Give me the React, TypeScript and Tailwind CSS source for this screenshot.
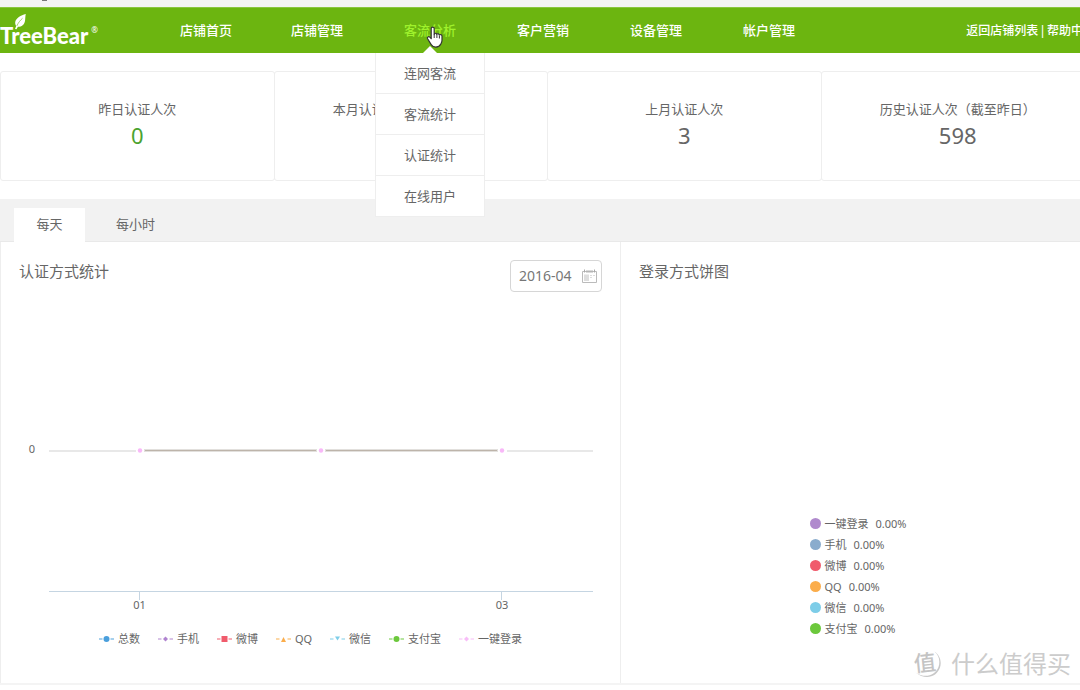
import React from 'react';

const navAfter = ['客户营销', '设备管理', '帐户管理'];
const submenu = ['连网客流', '客流统计', '认证统计', '在线用户'];

const stats = [
  { label: '昨日认证人次', value: '0', color: 'text-[#4ba32f]' },
  { label: '本月认证人次（截至昨日）', value: '', color: 'text-[#666666]' },
  { label: '上月认证人次', value: '3', color: 'text-[#666666]' },
  { label: '历史认证人次（截至昨日）', value: '598', color: 'text-[#666666]' },
];

const series = [
  { name: '总数', color: '#4a9fdc', mark: <circle cx="7.5" cy="5" r="3" /> },
  { name: '手机', color: '#b083d0', mark: <path d="M7.5 2.5 10 5 7.5 7.5 5 5z" /> },
  { name: '微博', color: '#f05b6c', mark: <path d="M4.5 2h6v6h-6z" /> },
  { name: 'QQ', color: '#fbad4b', mark: <path d="M7.5 3 10 8H5z" /> },
  { name: '微信', color: '#7dcde8', mark: <path d="M5 2.5h5l-2.5 4z" /> },
  { name: '支付宝', color: '#6cc83c', mark: <circle cx="7.5" cy="5" r="3" /> },
  { name: '一键登录', color: '#f8bdf8', mark: <path d="M7.5 2.500 10 5 7.5 7.500 5 5z" /> },
];

const shares = [
  { name: '一键登录', dot: 'bg-[#b08acd]' },
  { name: '手机', dot: 'bg-[#8aaccd]' },
  { name: '微博', dot: 'bg-[#f05b6c]' },
  { name: 'QQ', dot: 'bg-[#fbad4b]' },
  { name: '微信', dot: 'bg-[#7dcde8]' },
  { name: '支付宝', dot: 'bg-[#6cc83c]' },
];

function NavLink({ label }: { label: string }) {
  return (
    <a href="#" className="w-[110px] text-center">
      {label}
    </a>
  );
}

function Logo() {
  return (
    <a href="#" aria-label="TreeBear" className="relative flex w-[153px] shrink-0 items-start gap-[3px] pt-[15px]">
      <svg className="absolute top-[5px] left-[13px]" width="16" height="17" viewBox="0 0 16 17" fill="#fff">
        <path d="M12.8 1C8 2.2 2.600 5.200 2.200 9.200c-.1 1.500.3 2.700 1 3.700L2 16l1.500.3 1.400-2.500c3.800.1 6.400-2.200 7.100-5.800.4-2.300.2-4.700.8-7z" />
        <path d="M3.800 13C5.200 9.800 7.300 7.200 9.600 5.200" stroke="#6cb510" strokeWidth=".6" fill="none" />
      </svg>
      <span className="font-[Lato,sans-serif] text-[22px] leading-[26px] font-black">TreeBear</span>
      <span className="text-[8px] leading-[14px] font-normal">®</span>
    </a>
  );
}

function Header() {
  return (
    <header className="flex h-[46px] border-t border-[#8ac63f] bg-[#6cb510] text-[13px] font-medium text-white">
      <Logo />
      <nav className="flex h-[45px] items-center gap-[3px]">
        <a href="#" className="w-[106px] text-center">
          店铺首页
        </a>
        <NavLink label="店铺管理" />
        <div className="relative flex h-full w-[110px] items-center justify-center">
          <a href="#" aria-haspopup="true" className="text-[#9ff12c]">
            客流分析
          </a>
          <svg className="absolute bottom-0 left-[48px]" width="14" height="7" viewBox="0 0 14 7">
            <path d="M7 0 14 7H0z" fill="#fff" />
          </svg>
          <ul className="absolute top-full left-0 z-10 w-full border-x border-[#eeeeee] bg-white font-normal text-[#666666]">
            {submenu.map((s) => (
              <li key={s} className="h-[41px] border-b border-[#eeeeee]">
                <a href="#" className="flex h-full items-center justify-center pt-[2px]">
                  {s}
                </a>
              </li>
            ))}
          </ul>
          <svg className="absolute top-[18px] left-[51px] z-20" width="18" height="23" viewBox="0 0 18 23">
            <path
              d="M5.200 2.600c0-2 3-2 3 0v6l.3-.9c.8-.8 2.100-.4 2.300.7l.4-.4c.9-.6 2 0 2.100 1l.5-.3c1-.4 2.100.3 2.200 1.400v4.200c0 1.600-.6 2.600-1.200 3.800-.8 1.800-2.600 3-5 3-2.200 0-3.600-.9-4.600-2.500l-3.600-5.800c-.9-1.600.9-2.900 2.200-1.700l1.400 1.600z"
              fill="#fff"
              stroke="#333"
              strokeWidth="1.200"
              strokeLinejoin="round"
            />
            <path d="M8.200 8.500v3.500M10.900 8.800V12M13.400 9.500v3" stroke="#333" strokeWidth="1" fill="none" />
          </svg>
        </div>
        {navAfter.map((n) => (
          <NavLink key={n} label={n} />
        ))}
      </nav>
      <div className="ml-auto flex h-[45px] items-center gap-px text-[12px] whitespace-nowrap">
        <a href="#">返回店铺列表</a>
        <span>|</span>
        <a href="#">帮助中心</a>
      </div>
    </header>
  );
}

function AuthChart() {
  return (
    <svg className="block h-auto w-full" viewBox="1 292 619 328" role="img" aria-label="认证方式统计">
      <g fill="none">
        <path d="M49 451h87M507 451h86" stroke="#e8e8e8" strokeWidth="2" />
        <path d="M144 450.500h173M325 450.500h173" stroke="#e2e0dd" strokeWidth="3" />
        <path d="M145 450.500h171M326 450.500h171" stroke="#bdb4aa" strokeWidth="1" />
        <path d="M49 591.500h544M139.500 591v9M501.500 591v9" stroke="#c5d5e2" />
      </g>
      <g fill="#f8b8f8">
        {[140, 321, 502].map((x) => (
          <circle key={x} cx={x} cy="450.500" r="2.200" />
        ))}
      </g>
      <g fill="#666" fontSize="11" textAnchor="middle">
        <text x="32" y="453">0</text>
        <text x="139.500" y="609">01</text>
        <text x="502" y="609">03</text>
      </g>
    </svg>
  );
}

function Panels() {
  return (
    <div className="grid grid-cols-[620fr_475fr] border-t border-b-2 border-t-[#e9e9e9] border-b-[#f4f4f4]">
      <section className="min-w-0 border-l border-[#eeeeee] pb-[36px]">
        <div className="flex items-start justify-between px-[18px] pt-[18px]">
          <h2 className="text-[15px] leading-[22px]">认证方式统计</h2>
          <label className="flex h-[32px] w-[92px] items-center rounded border border-[#d6d6d6] pr-[4px] pl-[8px]">
            <input
              type="text"
              aria-label="月份"
              defaultValue="2016-04"
              className="w-full min-w-0 text-[14px] leading-[20px] text-[#777777] outline-none"
            />
            <svg className="shrink-0" width="15" height="15" viewBox="0 0 15 15" fill="none">
              <path d="M.5 2.500h14v11H.5z" stroke="#bbb" />
              <path d="M4 1.500h7v2H4z" fill="#b5b5b5" />
              <path d="M2.500.5v3M12.500.5v3" stroke="#aaa" />
              <path d="M2 5.500h5v6.500H2z" fill="#ddd" />
              <path d="M8 6.500h2M11 6.500h2M8 8.500h2" stroke="#ddd" />
            </svg>
          </label>
        </div>
        <AuthChart />
        <ul className="mt-[11px] flex justify-center gap-[18px] text-[11px] leading-[16px]">
          {series.map((s) => (
            <li key={s.name} className="flex items-center gap-1">
              <svg width="15" height="10" viewBox="0 0 15 10" fill={s.color}>
                <path d="M0 5h3.500M11.500 5H15" stroke={s.color} strokeOpacity=".65" strokeWidth="1.500" />
                {s.mark}
              </svg>
              {s.name}
            </li>
          ))}
        </ul>
      </section>
      <section className="min-w-0 border-l border-[#eeeeee] px-[18px] pt-[18px]">
        <h2 className="h-[32px] text-[15px] leading-[22px]">登录方式饼图</h2>
        <ul className="mx-auto mt-[221px] w-fit text-[11px] leading-[21px]">
          {shares.map((s) => (
            <li key={s.name} className="flex items-center">
              <span className={`mr-1 size-[11px] rounded-full ${s.dot}`} />
              <span className="mr-[7px]">{s.name}</span>
              <span>0.00%</span>
            </li>
          ))}
        </ul>
      </section>
    </div>
  );
}

function Watermark() {
  return (
    <div className="absolute right-[9px] bottom-[5px] flex items-center gap-[9px] text-[#cccccc]">
      <svg width="30" height="30" viewBox="0 0 30 30">
        <path d="M22.500 2.500C27.500 6 30 12 28 18.500 25 27.500 14 32 3.500 23.500 13 30 23 26.500 26.500 18 28.500 12 27 6.500 22.500 2.500z" fill="#c8c8c8" />
        <text x="13" y="22" fontSize="22" fontWeight="500" textAnchor="middle" fill="#c4c4c4" transform="rotate(-6 13 15)">
          值
        </text>
      </svg>
      <span className="text-[24px] leading-[32px]">什么值得买</span>
    </div>
  );
}

export default function App() {
  return (
    <div className="relative overflow-hidden bg-white font-['Noto_Sans','Noto_Sans_CJK_SC',sans-serif] text-[#666666]">
      <div className="w-[calc(100%+15px)]">
        <div className="h-[7px] bg-[#f4f4f4] pl-[42px]">
          <div className="h-px w-[5px] bg-[#777777]" />
        </div>
        <Header />
        <main>
          <dl className="mt-[18px] flex">
            {stats.map((s) => (
              <div
                key={s.label}
                className="-mr-px flex h-[110px] flex-1 flex-col items-center rounded-[3px] border border-[#eeeeee] pt-[27px] last:mr-0"
              >
                <dt className="text-[13px] leading-[20px]">{s.label}</dt>
                {s.value && <dd className={`text-[22px] leading-[32px] ${s.color}`}>{s.value}</dd>}
              </div>
            ))}
          </dl>
          <div role="tablist" className="mt-[18px] flex h-[42px] items-end bg-[#f2f2f2] pl-[14px] text-[13px]">
            <button role="tab" aria-selected="true" className="-mb-px h-[34px] w-[71px] bg-white">
              每天
            </button>
            <button role="tab" aria-selected="false" className="h-[33px] w-[101px]">
              每小时
            </button>
          </div>
          <Panels />
        </main>
      </div>
      <Watermark />
    </div>
  );
}
